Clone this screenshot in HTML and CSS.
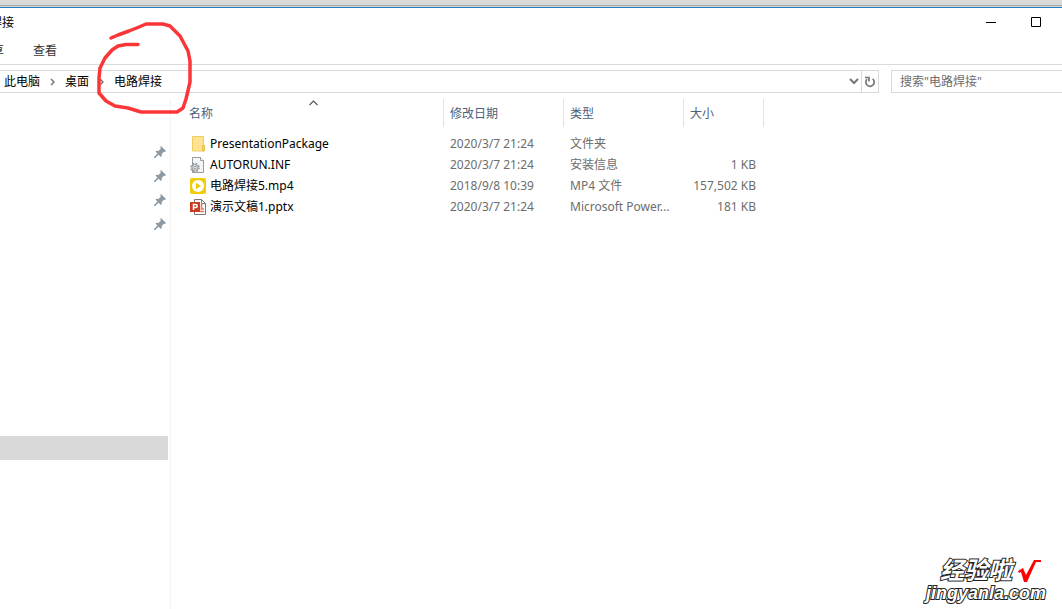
FILE: index.html
```
<!DOCTYPE html>
<html lang="zh-CN">
<head>
<meta charset="utf-8">
<title>电路焊接</title>
<link rel="stylesheet" href="styles.css">
</head>
<body>
<div class="desktop-strip"></div>
<div class="window">
  <header class="titlebar">
    <h1 class="title">焊接</h1>
    <div class="window-controls">
      <button class="control" aria-label="最小化"><svg width="10" height="10" viewBox="0 0 10 10"><path d="M0 5.5H10" stroke="#000"/></svg></button>
      <button class="control" aria-label="最大化"><svg width="10" height="10" viewBox="0 0 10 10"><path d="M.5.5h9v9h-9z" fill="none" stroke="#000"/></svg></button>
    </div>
  </header>
  <nav class="tabs">
    <button class="tab tab-cut">享</button>
    <button class="tab">查看</button>
  </nav>
  <div class="toolbar">
    <div class="address">
      <nav class="crumbs">
        <a href="#">此电脑</a>
        <svg class="sep" width="5" height="8" viewBox="0 0 5 8"><path d="M1 1l3 3-3 3" fill="none" stroke="#777" stroke-width="1.5"/></svg>
        <a href="#">桌面</a>
        <svg class="sep" width="5" height="8" viewBox="0 0 5 8"><path d="M1 1l3 3-3 3" fill="none" stroke="#777" stroke-width="1.5"/></svg>
        <a href="#">电路焊接</a>
      </nav>
      <button class="drop" aria-label="历史记录"><svg width="10" height="7" viewBox="0 0 10 7"><path d="M1 1l4 4 4-4" fill="none" stroke="#777" stroke-width="2"/></svg></button>
      <button class="refresh" aria-label="刷新"><svg width="12" height="12" viewBox="0 0 12 12"><path d="M8.600 2.800A4.200 4.200 0 1 1 3 3.200" fill="none" stroke="#777" stroke-width="1.700"/><path d="M1 1.500h4V5.500" fill="none" stroke="#777" stroke-width="1.700"/></svg></button>
    </div>
    <input class="search" type="search" aria-label="搜索" placeholder="搜索&quot;电路焊接&quot;">
  </div>
  <div class="content">
    <aside class="sidebar">
      <ul class="pins">
        <li><svg width="12" height="12" viewBox="0 0 12 12"><use href="#pin"/></svg></li>
        <li><svg width="12" height="12" viewBox="0 0 12 12"><use href="#pin"/></svg></li>
        <li><svg width="12" height="12" viewBox="0 0 12 12"><use href="#pin"/></svg></li>
        <li><svg width="12" height="12" viewBox="0 0 12 12"><use href="#pin"/></svg></li>
      </ul>
      <div class="selected"></div>
    </aside>
    <main class="files">
      <table class="list">
        <colgroup><col class="c-name"><col class="c-date"><col class="c-type"><col class="c-size"></colgroup>
        <thead>
          <tr>
            <th>名称<svg class="sort" width="9" height="6" viewBox="0 0 9 6"><path d="M.5 5l4-4 4 4" fill="none" stroke="#555" stroke-width="1.200"/></svg></th>
            <th>修改日期</th><th>类型</th><th>大小</th>
          </tr>
        </thead>
        <tbody>
          <tr>
            <td><span class="file"><svg width="16" height="16" viewBox="0 0 16 16"><path d="M2.500.5h11v14.500h-11z" fill="#ffe391" stroke="#efcd63"/><path d="M12.500 9.500h2v5.500h-2z" fill="#f8d76c" stroke="#e4bd4d"/></svg>PresentationPackage</span></td>
            <td>2020/3/7 21:24</td><td>文件夹</td><td></td>
          </tr>
          <tr>
            <td><span class="file"><svg width="16" height="16" viewBox="0 0 16 16"><path d="M2.500.5h8l3 3v12h-11z" fill="#f5f5f5" stroke="#9a9a9a"/><path d="M10.500.5v3h3" fill="#fff" stroke="#9a9a9a"/><circle cx="5" cy="10.500" r="4" fill="none" stroke="#939aa0" stroke-width="1.500" stroke-dasharray="1.800 1.340"/><circle cx="5" cy="10.500" r="3" fill="#dfe3e6" stroke="#939aa0"/><circle cx="5" cy="10.500" r="1.200" fill="#fff" stroke="#939aa0"/></svg>AUTORUN.INF</span></td>
            <td>2020/3/7 21:24</td><td>安装信息</td><td>1 KB</td>
          </tr>
          <tr>
            <td><span class="file"><svg width="16" height="16" viewBox="0 0 16 16"><rect width="16" height="16" rx="2" fill="#f2cc0c"/><circle cx="8" cy="8" r="6" fill="#fff"/><path d="M6 4.800v6.400L11 8z" fill="#f0c800"/></svg>电路焊接5.mp4</span></td>
            <td>2018/9/8 10:39</td><td>MP4 文件</td><td>157,502 KB</td>
          </tr>
          <tr>
            <td><span class="file"><svg width="16" height="16" viewBox="0 0 16 16"><path d="M4.500.5h7l4 4v11h-11z" fill="#fff" stroke="#777"/><path d="M11.500.5v4h4" fill="none" stroke="#777"/><path d="M11.500 5v5H14M10 12.500h4" fill="none" stroke="#e9765a" stroke-width="1.500"/><rect y="3" width="10" height="10" fill="#c93d1e"/><path d="M3.500 11V5.500h2.200a1.500 1.500 0 0 1 0 3H3.500" fill="none" stroke="#fff" stroke-width="1.500"/></svg>演示文稿1.pptx</span></td>
            <td>2020/3/7 21:24</td><td>Microsoft Power...</td><td>181 KB</td>
          </tr>
        </tbody>
      </table>
    </main>
  </div>
</div>
<svg class="defs" width="0" height="0"><defs><g id="pin" fill="#8e99a3"><path d="M7 0l5 5-1 1-1-.3-2.300 2.300.1 2.200-1 .8L1.500 5.800l.8-1 2.200.1L6.800 2.500 6.300 1z"/><path d="M3.500 7.500l1.200 1.200L1 12H0v-1z"/></g></defs></svg>
<svg class="marker" width="100" height="96" viewBox="95 20 100 96"><path d="M111 38L118 35 129 31 139 27 146 24H163L170 26 180 36 188 51 190 61V82L186 99 183 108 177 112H141L128 108 115 106 106 101 99 93V78L100 68 105 58 112 50 118 46 126 44.500H138" fill="none" stroke="#fb3638" stroke-width="3.500" stroke-linecap="round" stroke-linejoin="round"/></svg>
<div class="watermark">
  <div class="brand"><span>经验啦</span><svg width="24" height="24" viewBox="0 0 24 24"><path d="M1 12l5-3 3 7L17 1h7v2h-5L10 23H7L4 13l-2 1z" fill="#f00"/></svg></div>
  <div class="site">jingyanla.com</div>
</div>
</body>
</html>
```
FILE: styles.css
```
* { box-sizing: border-box; }
body {
  margin: 0;
  min-height: 100vh;
  display: flex;
  flex-direction: column;
  overflow: hidden;
  background: #fff;
  color: #000;
  font: 12px/20px "Noto Sans", "Noto Sans CJK SC", sans-serif;
}
button { border: 0; padding: 0; background: none; font: inherit; color: inherit; }
a { color: inherit; text-decoration: none; }
svg { display: block; flex: none; }
.defs { position: absolute; }
.desktop-strip { height: 7px; background: linear-gradient(#d9d9d9 5px, #a9a9a9 5px 6px, #d2d2d2 6px); }
.window { flex: 1; display: flex; flex-direction: column; border-top: 1px solid #2580c3; }
.titlebar { display: flex; justify-content: space-between; height: 28px; }
.title { margin: 5px 0 0; width: 14px; height: 20px; display: flex; justify-content: flex-end; overflow: hidden; white-space: nowrap; font-size: 12px; font-weight: 400; }
.window-controls { display: flex; padding-right: 4px; }
.control { width: 45px; display: grid; place-items: center; }
.tabs { display: flex; gap: 29px; height: 29px; padding-top: 5px; border-bottom: 1px solid #dadada; color: #333; }
.tab { height: 20px; white-space: nowrap; }
.tab-cut { width: 4px; display: flex; justify-content: flex-end; overflow: hidden; }
.toolbar { display: flex; gap: 12px; padding-top: 5px; }
.address { flex: 1; display: flex; height: 23px; border: 1px solid #d9d9d9; border-left: 0; }
.crumbs { flex: 1; display: flex; align-items: center; gap: 10px; padding-left: 4px; }
.drop { width: 14px; display: grid; place-items: center; }
.refresh { width: 17px; display: grid; place-items: center; border-left: 1px solid #d9d9d9; }
.search { width: 171px; height: 23px; padding: 0 8px; border: 1px solid #d9d9d9; border-right: 0; background: #fff; font: inherit; outline: 0; }
.search::placeholder { color: #6d6d6d; opacity: 1; }
.content { flex: 1; display: flex; padding-top: 6px; }
.sidebar { width: 171px; border-right: 1px solid #f3f3f3; }
.pins { list-style: none; margin: 0; padding: 41px 4px 0 0; display: flex; flex-direction: column; align-items: flex-end; }
.pins li { height: 24px; display: flex; align-items: center; }
.selected { height: 24px; margin: 200px 2px 0 0; background: #d9d9d9; }
.files { flex: 1; padding-left: 13px; }
.list { table-layout: fixed; width: 580px; border-collapse: separate; border-spacing: 0; }
.c-name { width: 260px; }
.c-date, .c-type { width: 120px; }
.c-size { width: 80px; }
th { position: relative; height: 28px; padding: 2px 6px 0; border-right: 1px solid #e2e2e2; text-align: left; font-weight: 400; color: #4c607a; }
.sort { position: absolute; left: 125px; top: 1px; }
td { height: 21px; padding: 0 6px; line-height: 20px; color: #6d6d6d; white-space: nowrap; }
th:first-child { padding-left: 5px; }
tbody::before { content: ""; display: table-row; height: 6px; }
td:last-child { text-align: right; padding-right: 8px; }
td:first-child { color: #000; }
.file { display: flex; align-items: center; gap: 4px; }
.marker { position: absolute; left: 95px; top: 20px; }
.watermark {
  position: absolute;
  right: 16px;
  bottom: 6px;
  color: #fff;
  font-family: "Liberation Sans", "Noto Sans CJK SC", sans-serif;
  font-weight: 700;
  -webkit-text-stroke: 2px #222;
  paint-order: stroke fill;
}
.brand { display: flex; justify-content: flex-end; align-items: center; gap: 5px; padding-right: 5px; font-size: 24px; line-height: 24px; font-style: italic; }
.site { font-size: 18px; line-height: 20px; font-style: italic; }
```
